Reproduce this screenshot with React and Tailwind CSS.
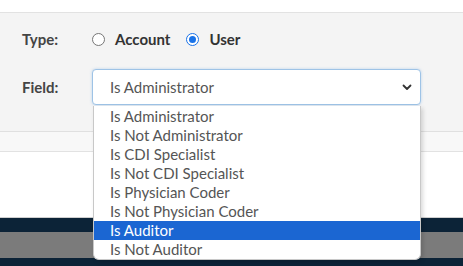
import React from 'react'

const options = [
  'Is Administrator',
  'Is Not Administrator',
  'Is CDI Specialist',
  'Is Not CDI Specialist',
  'Is Physician Coder',
  'Is Not Physician Coder',
  'Is Auditor',
  'Is Not Auditor',
]

function Radio({ checked, label }) {
  return (
    <label className="flex items-center">
      {checked ? (
        <span className="flex h-[13px] w-[13px] items-center justify-center rounded-full border border-[#1a73e8] bg-white">
          <span className="h-[7px] w-[7px] rounded-full bg-[#1a73e8]" />
        </span>
      ) : (
        <span className="h-[13px] w-[13px] rounded-full border border-[#767676] bg-white" />
      )}
      <span className="ml-[10px] text-[15px] font-bold text-[#333]">{label}</span>
    </label>
  )
}

export default function App() {
  const active = 'Is Auditor'

  return (
    <div className="relative h-[266px] w-[463px] overflow-hidden bg-white font-['Lato',sans-serif]">
      <div className="h-[13px] border-b border-[#e2e2e2] bg-white" />

      {/* Filter form */}
      <div className="flex h-[119px] flex-col border-b border-[#e0e0e0] bg-[#f4f4f4] pt-[13px]">
        <div className="flex h-[26px] items-center">
          <div className="w-[92px] pl-[22px] text-[15px] font-bold text-[#444]">Type:</div>
          <div className="flex items-center gap-4">
            <Radio label="Account" />
            <Radio checked label="User" />
          </div>
        </div>
        <div className="mt-[17px] flex h-[36px] items-center">
          <div className="w-[92px] pl-[22px] text-[15px] font-bold text-[#444]">Field:</div>
          <div className="flex h-[36px] w-[329px] items-center justify-between rounded-[4px] border border-[#9ec3e6] bg-white pl-[17px] pr-[8px] shadow-[0_0_3px_rgba(80,150,220,0.35)]">
            <span className="text-[15px] text-[#555]">Is Administrator</span>
            <svg width="10" height="10" viewBox="0 0 10 10" className="text-[#333]">
              <path d="M1.5 3.5 L5 7 L8.5 3.5" fill="none" stroke="currentColor" strokeWidth="1.8" strokeLinecap="round" strokeLinejoin="round" />
            </svg>
          </div>
        </div>
      </div>

      <div className="h-[20px] border-b border-[#e2e2e2] bg-[#f8f8f8]" />
      <div className="h-[66px] border-b border-[#cfcfcf] bg-white" />
      <div className="h-[14px] bg-[#0c2337]" />
      <div className="h-[26px] bg-[#7b7b7b]" />
      <div className="h-[8px] bg-[#0c2337]" />

      {/* Open option list */}
      <ul className="absolute left-[93px] top-[106px] w-[328px] overflow-hidden rounded-b-[6px] border border-t-0 border-[#c8c8c8] bg-white pt-[1px] shadow-[2px_2px_4px_rgba(0,0,0,0.15)]">
        {options.map((o) => (
          <li
            key={o}
            className={`flex h-[19px] items-center pl-[16px] text-[15px] leading-none ${
              o === active ? 'bg-[#1b66d2] text-white' : 'text-[#555]'
            }`}
          >
            {o}
          </li>
        ))}
      </ul>
    </div>
  )
}
